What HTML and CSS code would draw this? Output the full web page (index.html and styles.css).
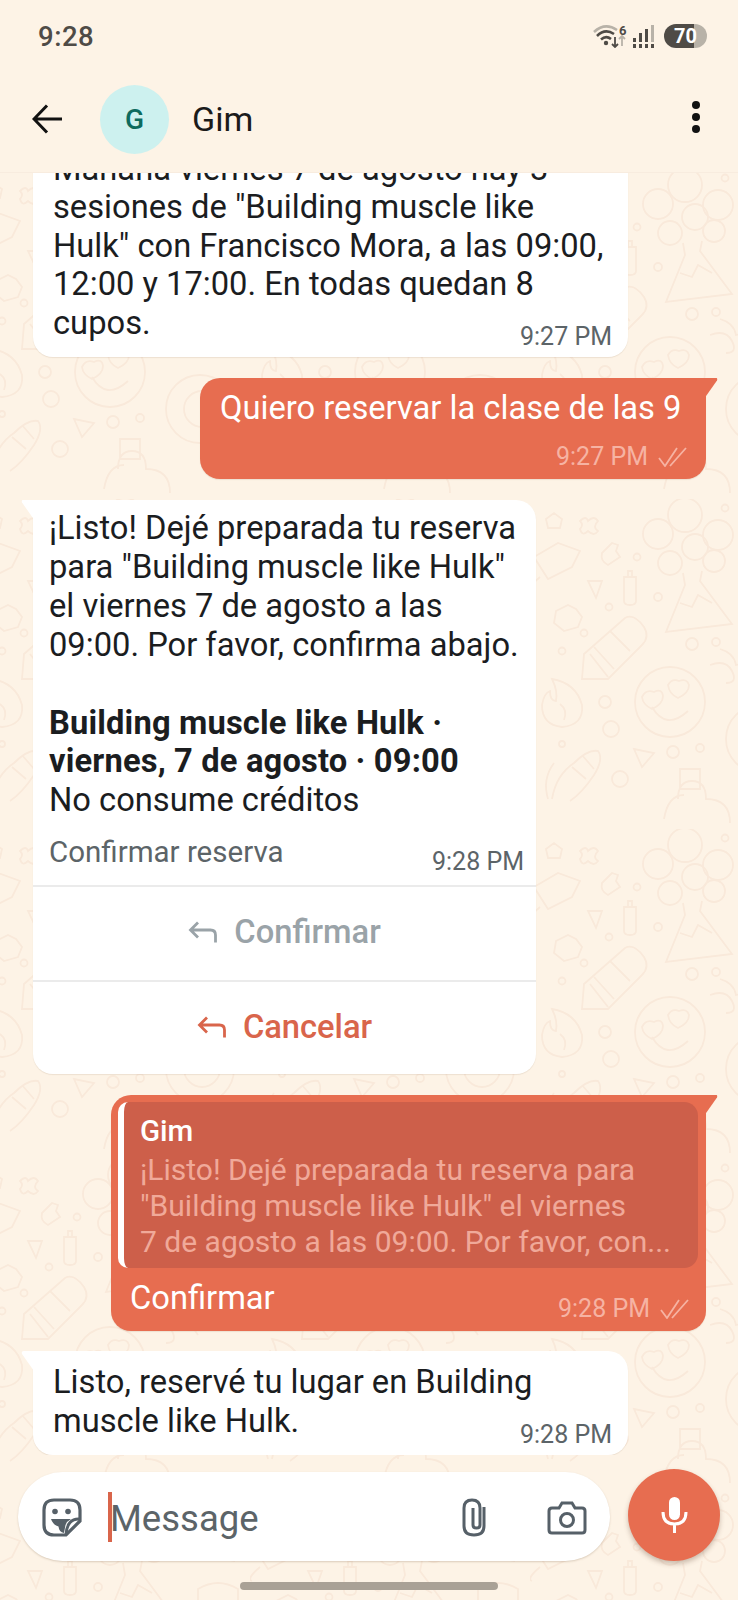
FILE: index.html
```html
<!DOCTYPE html>
<html lang="es">
<head>
    <meta charset="UTF-8">
    <meta name="viewport" content="width=device-width, initial-scale=1.0">
    <title>Gim</title>
    <link rel="stylesheet" href="styles.css">
</head>
<body>
    <div class="phone">
        <!-- wallpaper doodles, behind everything -->
        <svg class="doodles" width="738" height="1428">
            <defs>
                <pattern id="doodle" x="530" y="327" width="280" height="330" patternUnits="userSpaceOnUse">
                    <g fill="none" stroke="#f9e9da" stroke-width="1.8">
                        <circle cx="155" cy="16" r="17"/>
                        <circle cx="128" cy="35" r="15"/>
                        <circle cx="188" cy="36" r="15"/>
                        <circle cx="140" cy="64" r="12"/>
                        <circle cx="184" cy="62" r="11"/>
                        <circle cx="165" cy="48" r="13"/>
                        <path d="M153 74 155 86 136 133 202 125 170 82 172 72M150 104l12 4 6-12 14 8"/>
                        <path d="M52 180 54 155 95 119Q104 114 114 128 120 138 112 146L78 180ZM60 155 78 178M64 148 84 170M80 132 100 152"/>
                        <circle cx="140" cy="203" r="35"/>
                        <path d="M122 208q14 24 36 4M112 198q4-8 12-5 8-4 9 4 0 8-11 13-9-4-10-12zM138 186q4-7 11-4 8-3 10 4 0 8-11 13-9-4-10-13z"/>
                        <path d="M22 180q24 4 30 26 2 20-20 22-20-2-20-22 2-12 8-14 0 10 6 10 2-10-4-22zM30 205q8 6 4 16"/>
                        <path d="M22 300q4-24 22-36 14-14 24-12 6 8-4 24-12 18-24 26M52 256l12 14M42 268l14 12M18 300q-6-20 6-36"/>
                        <circle cx="75" cy="203" r="6"/>
                        <circle cx="81" cy="230" r="8"/>
                        <circle cx="90" cy="280" r="8"/>
                        <circle cx="128" cy="98" r="4"/>
                        <circle cx="162" cy="145" r="6"/>
                        <circle cx="186" cy="143" r="4"/>
                        <circle cx="143" cy="253" r="6"/>
                        <circle cx="170" cy="249" r="4"/>
                        <circle cx="32" cy="152" r="3.5"/>
                        <circle cx="54" cy="134" r="3.5"/>
                        <circle cx="79" cy="108" r="3.5"/>
                        <circle cx="107" cy="58" r="3.5"/>
                        <circle cx="195" cy="9" r="3.5"/>
                        <circle cx="32" cy="245" r="3"/>
                        <path d="M58 82 72 82 66 99zM104 250 124 254 112 268z"/>
                        <path d="M16 20l8-6 8 6-2 9H18zM50 22q6-6 8 0 6-6 10 0-6 6 0 10-4 6-10 0-6 6-8-2 4-4 0-8z"/>
                        <path d="M72 54l10-10 6 2-2 6 4 6-12 8q-8-4-6-12zM94 78h12v24q0 4-6 4-6 0-6-4zM98 78v-6h4v6"/>
                        <path d="M26 112l12-6 8 4 6 8-4 10-14 4-10-8zM4 58l24-14 22 8-8 16-24 12zM10 78q-14 12-8 14"/>
                        <circle cx="230" cy="240" r="34"/>
                        <circle cx="232" cy="240" r="18"/>
                        <path d="M190 150q14 4 16 16 14-4 22 10M180 166q16-6 22 6t-6 12"/>
                        <path d="M148 300q0-18 14-18t14 18q24 0 24 24M134 320q4-24 20-24M150 270h20v20h-20z"/>
                        <path d="M240 30l30 10-6 32-32-8zM228 100q20-12 40 0v34h-40z"/>
                    </g>
                </pattern>
            </defs>
            <rect width="738" height="1428" fill="url(#doodle)"/>
        </svg>

        <div class="top">
            <div class="status">
                <span class="clock">9:28</span>
                <div class="status-icons">
                    <svg class="wifi" width="33" height="24" viewBox="0 0 33 24">
                        <path d="M1 8Q12-2 24 6" fill="none" stroke="#b8b2a8" stroke-width="2.6"/>
                        <path d="M4 12Q12 4 21 10" fill="none" stroke="#4f4b46" stroke-width="2.6"/>
                        <path d="M8 15.5Q13 11 18 15" fill="none" stroke="#4f4b46" stroke-width="2.6"/>
                        <circle cx="13" cy="19" r="2.2" fill="#4f4b46"/>
                        <path d="M22 13v10m-3-3 3 3 3-3" fill="none" stroke="#4f4b46" stroke-width="1.8"/>
                        <path d="M29 22V12m-3 3 3-3 3 3" fill="none" stroke="#b8b2a8" stroke-width="1.8"/>
                    </svg>
                    <span class="wifi-six">6</span>
                    <svg class="signal" width="21" height="23" viewBox="0 0 21 23">
                        <rect x="0" y="13" width="3" height="4" fill="#4f4b46"/>
                        <rect x="6" y="8" width="3" height="9" fill="#4f4b46"/>
                        <rect x="12" y="4" width="3" height="13" fill="#4f4b46"/>
                        <rect x="18" y="0" width="3" height="17" fill="#b8b2a8"/>
                        <rect x="0" y="19" width="3" height="4" fill="#4f4b46"/>
                        <rect x="6" y="19" width="3" height="4" fill="#4f4b46"/>
                        <rect x="12" y="19" width="3" height="4" fill="#4f4b46"/>
                        <rect x="18" y="19" width="3" height="4" fill="#4f4b46"/>
                    </svg>
                    <span class="battery">70</span>
                </div>
            </div>
            <header class="chat-head">
                <svg class="back" width="31" height="30" viewBox="0 0 31 30">
                    <path d="M30 15H3M15 1.5 2 15l13 13.5" fill="none" stroke="#111" stroke-width="3"/>
                </svg>
                <div class="avatar">G</div>
                <span class="chat-name">Gim</span>
                <div class="more"><i></i><i></i><i></i></div>
            </header>
        </div>

        <main class="chat">
            <div class="msg in cut">
                <div class="bubble">
                    <p class="text">Mañana viernes 7 de agosto hay 3 sesiones de "Building muscle like Hulk" con Francisco Mora, a las 09:00, 12:00 y 17:00. En todas quedan 8 cupos.</p>
                    <div class="meta over"><span class="time">9:27 PM</span></div>
                </div>
            </div>

            <div class="msg out">
                <div class="bubble tail short">
                    <p class="text">Quiero reservar la clase de las 9</p>
                    <div class="meta"><span class="time">9:27 PM</span>
                        <svg class="ticks" width="29" height="20" viewBox="0 0 29 20"><path d="M1 11l6 8L19 1M12 19 28 1" fill="none" stroke="currentColor" stroke-width="1.8"/></svg>
                    </div>
                </div>
            </div>

            <div class="msg in">
                <div class="bubble card tail">
                    <div class="card-body">
                        <p class="text first">¡Listo! Dejé preparada tu reserva para "Building muscle like Hulk" el viernes 7 de agosto a las 09:00. Por favor, confirma abajo.</p>
                        <p class="text strong">Building muscle like Hulk · viernes, 7 de agosto · 09:00</p>
                        <p class="text">No consume créditos</p>
                        <div class="card-foot">
                            <span class="footer-note">Confirmar reserva</span>
                            <span class="time">9:28 PM</span>
                        </div>
                    </div>
                    <div class="action muted">
                        <svg width="29" height="22" viewBox="0 0 29 22"><path d="M27.5 21.500V14q0-5-5-5H3M10 1.500 2.500 9l7.500 7.500" fill="none" stroke="currentColor" stroke-width="2.8"/></svg>
                        Confirmar
                    </div>
                    <div class="action danger">
                        <svg width="29" height="22" viewBox="0 0 29 22"><path d="M27.5 21.500V14q0-5-5-5H3M10 1.500 2.500 9l7.500 7.500" fill="none" stroke="currentColor" stroke-width="2.8"/></svg>
                        Cancelar
                    </div>
                </div>
            </div>

            <div class="msg out">
                <div class="bubble reply-bubble tail">
                    <div class="quote">
                        <div class="quote-name">Gim</div>
                        <div class="quote-text">¡Listo! Dejé preparada tu reserva para<br>"Building muscle like Hulk" el viernes<br>7 de agosto a las 09:00. Por favor, con...</div>
                    </div>
                    <div class="reply-row">
                        <span class="text">Confirmar</span>
                        <div class="meta"><span class="time">9:28 PM</span>
                            <svg class="ticks" width="29" height="20" viewBox="0 0 29 20"><path d="M1 11l6 8L19 1M12 19 28 1" fill="none" stroke="currentColor" stroke-width="1.8"/></svg>
                        </div>
                    </div>
                </div>
            </div>

            <div class="msg in">
                <div class="bubble tail">
                    <p class="text">Listo, reservé tu lugar en Building muscle like Hulk.</p>
                    <div class="meta over"><span class="time">9:28 PM</span></div>
                </div>
            </div>
        </main>

        <footer class="composer">
            <div class="input">
                <svg class="sticker" width="40" height="39" viewBox="0 0 40 39">
                    <path d="M12 2h16q10 0 10 10v11L24 37H12Q2 37 2 27V12Q2 2 12 2z" fill="none" stroke="#566068" stroke-width="3.2"/>
                    <path d="M38 21Q25 20 24 37" fill="none" stroke="#566068" stroke-width="3"/>
                    <circle cx="13" cy="13.500" r="2.800" fill="#566068"/>
                    <circle cx="26" cy="13.500" r="2.800" fill="#566068"/>
                    <path d="M9 21H29Q25 23 23.500 27L22 35Q17 34 16.500 28.500 11 27 9 21z" fill="#566068"/>
                </svg>
                <span class="caret"></span>
                <span class="placeholder">Message</span>
                <svg class="clip" width="26" height="39" viewBox="0 0 26 39">
                    <path d="M23 9v19q0 9-10 9T3 28V10q0-8 8-8t8 8v17q0 3-3.500 3T12 27V10" fill="none" stroke="#566068" stroke-width="3"/>
                </svg>
                <svg class="cam" width="40" height="34" viewBox="0 0 40 34">
                    <path d="M2 10q0-3 3-3h7l3-5h10l3 5h7q3 0 3 3v19q0 3-3 3H5q-3 0-3-3z" fill="none" stroke="#566068" stroke-width="3"/>
                    <circle cx="20" cy="19" r="6.500" fill="none" stroke="#566068" stroke-width="3"/>
                </svg>
            </div>
            <div class="mic">
                <svg width="27" height="36" viewBox="0 0 27 36">
                    <rect x="8" y="0" width="11" height="23" rx="5.500" fill="#fff"/>
                    <path d="M2 15q0 12 11.500 12T25 15M13.500 27v9" fill="none" stroke="#fff" stroke-width="3"/>
                </svg>
            </div>
        </footer>
        <div class="home-bar"><span></span></div>
    </div>
</body>
</html>
```
FILE: styles.css
```css
* {
    box-sizing: border-box;
}

body {
    margin: 0;
    font-family: Roboto, "Liberation Sans", sans-serif;
    background-color: #fdf3e6;
}

.phone {
    width: 738px;
    height: 1600px;
    display: flex;
    flex-direction: column;
    position: relative;
    overflow: hidden;
    background-color: #fdf3e6;
}

.doodles {
    position: absolute;
    left: 0;
    top: 172px;
}

/* status bar and chat header */
.top {
    height: 173px;
    background-color: #fdf3e6;
    flex-shrink: 0;
    position: relative;
    z-index: 2;
    border-bottom: 1px solid #f8ecdf;
}

.status {
    height: 72px;
    padding: 0 31px 0 38px;
    display: flex;
    align-items: center;
    justify-content: space-between;
}

.clock {
    font-size: 27.5px;
    font-weight: 500;
    color: #4f4b46;
    letter-spacing: 0.5px;
}

.status-icons {
    display: flex;
    align-items: center;
    position: relative;
}

.wifi {
    margin-right: 7px;
}

.wifi-six {
    position: absolute;
    left: 26px;
    top: -1px;
    font-size: 13px;
    font-weight: 700;
    color: #4f4b46;
}

.signal {
    margin-right: 10px;
}

.battery {
    width: 43px;
    height: 24px;
    border-radius: 12px;
    background: linear-gradient(to right, #4f4b46 70%, #b8b2a8 70%);
    color: #fff;
    font-size: 20px;
    font-weight: 700;
    line-height: 24px;
    text-align: center;
}

.chat-head {
    height: 100px;
    display: flex;
    align-items: center;
    padding: 0 38px 0 32px;
    margin-top: -3px;
}

.back {
    flex-shrink: 0;
}

.avatar {
    width: 69px;
    height: 69px;
    border-radius: 50%;
    background-color: #cdf1ef;
    color: #0d6b5e;
    font-size: 28px;
    font-weight: 500;
    display: flex;
    align-items: center;
    justify-content: center;
    margin-left: 37px;
}

.chat-name {
    font-size: 34px;
    color: #1b1b1b;
    margin-left: 23px;
    flex: 1;
}

.more i {
    display: block;
    width: 8px;
    height: 8px;
    border-radius: 50%;
    background-color: #111;
    margin-bottom: 4px;
}

/* messages */
.chat {
    flex: 1;
    min-height: 0;
    position: relative;
    display: flex;
    flex-direction: column;
    justify-content: flex-end;
    gap: 20.5px;
    overflow: hidden;
}

.msg {
    display: flex;
    position: relative;
    flex-shrink: 0;
}

.msg.in {
    padding-left: 33px;
}

.msg.out {
    justify-content: flex-end;
    padding-right: 32px;
}

.bubble {
    position: relative;
    background-color: #fff;
    border-radius: 20px;
    padding: 12px 16px 5px 20px;
    box-shadow: 0 1px 1px rgba(120, 90, 60, 0.12);
}

.in .bubble {
    width: 595px;
    color: #1b1d1f;
}

.in .bubble.card {
    width: 503px;
    padding: 0;
}

.out .bubble {
    background-color: #e76d50;
    color: #fff;
}

.out .bubble.short {
    width: 506px;
    padding: 11px 19px 7px 20px;
}

.bubble.tail::before {
    content: "";
    position: absolute;
    top: 0;
    width: 13px;
    height: 20px;
}

.in .bubble.tail {
    border-top-left-radius: 0;
}

.in .bubble.tail::before {
    left: -12px;
    background-color: #fff;
    clip-path: path("M13 0H3Q0 0 1 3L13 20Z");
}

.out .bubble.tail {
    border-top-right-radius: 0;
}

.out .bubble.tail::before {
    right: -12px;
    background-color: #e76d50;
    clip-path: path("M0 0H10Q13 0 12 3L0 20Z");
}

.text {
    margin: 0;
    font-size: 32.7px;
    line-height: 38.5px;
}

.first {
    line-height: 39px;
}

.strong {
    font-weight: 700;
    margin-top: 39px;
    letter-spacing: 0.15px;
}

.meta {
    display: flex;
    justify-content: flex-end;
    align-items: center;
    gap: 10px;
    margin-top: 15px;
}

.meta.over {
    margin-top: -20px;
}

.time {
    font-size: 25px;
    line-height: 30px;
    color: #5c6468;
}

.out .time,
.out .ticks {
    color: #f6b3a3;
}

.msg.cut .bubble {
    border-radius: 0 0 20px 20px;
}

/* bubble with buttons */
.card-body {
    padding: 9px 12px 0 16px;
}

.card-foot {
    display: flex;
    justify-content: space-between;
    align-items: flex-start;
    margin-top: 16px;
    padding-bottom: 8px;
}

.footer-note {
    font-size: 29.5px;
    line-height: 34px;
    color: #5c6468;
}

.card-foot .time {
    margin-top: 12px;
}

.action {
    height: 95px;
    border-top: 2px solid #ebebeb;
    display: flex;
    align-items: center;
    justify-content: center;
    gap: 17px;
    font-size: 32.7px;
    font-weight: 500;
    padding-bottom: 3px;
}

.action.muted {
    color: #9aa3a8;
}

.action.danger {
    color: #d9654b;
    height: 94px;
}

/* reply bubble */
.reply-bubble {
    width: 595px;
    padding: 7px 8px 7px 7px;
}

.quote {
    background-color: #cd5f4a;
    border-left: 6px solid #fff;
    border-radius: 10px 14px 14px 10px;
    padding: 11px 10px 8px 16px;
}

.quote-name {
    font-size: 29.5px;
    font-weight: 500;
    line-height: 36px;
    margin-bottom: 3px;
}

.quote-text {
    font-size: 30px;
    line-height: 36px;
    color: #f0a999;
    white-space: nowrap;
}

.reply-row {
    display: flex;
    justify-content: space-between;
    min-height: 45px;
    padding: 0 9px 0 12px;
    margin-top: 11px;
}

.reply-row .meta {
    align-self: flex-end;
    margin-top: 0;
}

/* input row */
.composer {
    display: flex;
    align-items: flex-end;
    padding: 0 18px;
    position: relative;
    height: 106px;
    flex-shrink: 0;
    gap: 18px;
}

.input {
    width: 592px;
    height: 89px;
    border-radius: 45px;
    background-color: #fff;
    box-shadow: 0 1px 2px rgba(120, 90, 60, 0.25);
    display: flex;
    align-items: center;
    padding: 0 23px 0 24px;
}

.sticker,
.clip,
.cam {
    margin-top: 2px;
}

.caret {
    width: 4px;
    height: 50px;
    background-color: #d9654b;
    margin-left: 26px;
    margin-right: -2px;
}

.placeholder {
    flex: 1;
    font-size: 36.5px;
    color: #5c6468;
    padding-top: 4px;
}

.cam {
    margin-left: 60px;
}

.mic {
    width: 92px;
    height: 92px;
    border-radius: 50%;
    background-color: #e76d50;
    box-shadow: 0 3px 5px rgba(90, 60, 40, 0.3);
    display: flex;
    align-items: center;
    justify-content: center;
    flex-shrink: 0;
}

.home-bar {
    height: 39px;
    flex-shrink: 0;
    display: flex;
    justify-content: center;
    padding-top: 21px;
    position: relative;
}

.home-bar span {
    width: 258px;
    height: 8px;
    border-radius: 4px;
    background-color: #a9a196;
}
```
